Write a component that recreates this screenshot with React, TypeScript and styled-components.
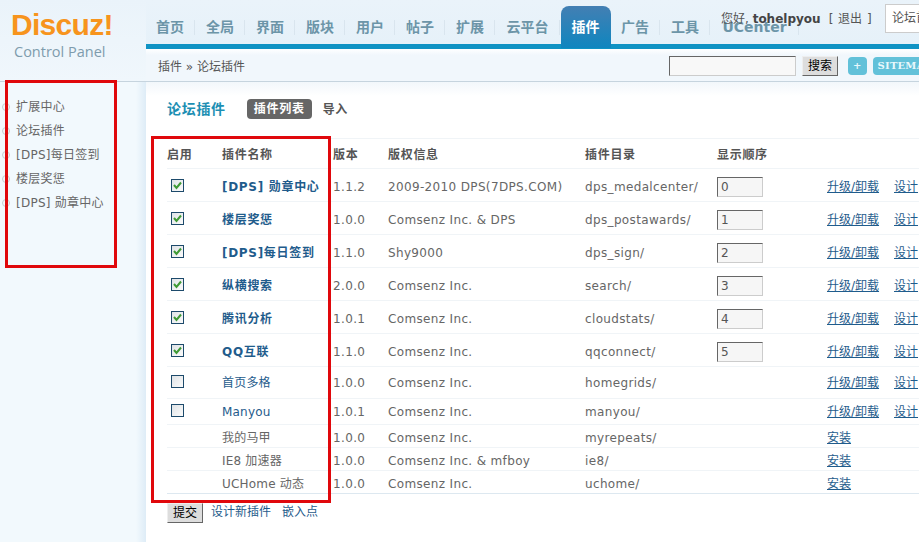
import React from 'react';
import styled, { createGlobalStyle } from 'styled-components';

const GlobalStyle = createGlobalStyle`
  html, body {
    margin: 0;
    padding: 0;
    height: 542px;
    overflow: hidden;
    background: #fff;
  }
  body {
    font: 12px/1.5 "DejaVu Sans", "Noto Sans CJK SC", sans-serif;
    color: #666;
  }
  * { box-sizing: border-box; }
`;

const Page = styled.div`
  position: relative;
  display: grid;
  grid-template-columns: 147px 1fr;
  width: 919px;
  height: 542px;
  overflow: hidden;
`;

const Side = styled.aside`
  display: flex;
  flex-direction: column;
  background: #f2f9fd;
`;

const LogoBox = styled.div`
  height: 82px;
  padding: 7px 0 0 11px;
  background: linear-gradient(#eaf3fa, #f0f7fc);
  border-bottom: 1px solid #c6d4de;
`;

const LogoMark = styled.div`
  font: bold 30px/36px "Liberation Sans", sans-serif;
  letter-spacing: -0.7px;
  color: #f7941d;
`;

const LogoSub = styled.div`
  margin: 0 0 0 3px;
  font: 14.5px/18px "Open Sans", sans-serif;
  color: #7e9cad;
`;

const SideMenu = styled.ul`
  flex: 1;
  list-style: none;
  margin: 0;
  padding: 13px 0 0;
  background: linear-gradient(90deg, #f2f9fd 136px, #dcebf6 147px);
`;

const SideItem = styled.li`
  position: relative;
  height: 24px;
  padding-left: 16px;
  line-height: 24px;
  letter-spacing: 0.25px;
  color: #666;

  &::before {
    content: '';
    position: absolute;
    left: 2px;
    top: 8px;
    width: 6px;
    height: 6px;
    border-radius: 50%;
    border: 1px solid #c4ccd0;
  }
`;

const Main = styled.main`
  display: flex;
  flex-direction: column;
  min-width: 0;
  margin-left: -1px;
`;

const Nav = styled.nav`
  display: flex;
  align-items: flex-start;
  height: 49px;
  padding-top: 10px;
  background: linear-gradient(#eaf3fa, #e6f1f9);
  border-bottom: 5px solid #0f93c4;
`;

const NavItem = styled.div<{ $wide?: number }>`
  position: relative;
  flex: none;
  width: ${p => p.$wide ?? 50}px;
  height: 34px;
  padding-right: 2px;
  text-align: center;
  font: bold 14px/34px "DejaVu Sans", "Noto Sans CJK SC", sans-serif;
  color: #6c95a8;

  &::after {
    content: '';
    position: absolute;
    right: 1px;
    top: 10px;
    width: 1px;
    height: 15px;
    background: #d9e5ee;
  }
`;

const ActiveNavItem = styled.div`
  flex: none;
  width: 50px;
  height: 42px;
  margin-top: -4px;
  padding: 4px 1px 0 0;
  text-align: center;
  font: bold 14px/34px "DejaVu Sans", "Noto Sans CJK SC", sans-serif;
  color: #fff;
  background: linear-gradient(#437fb3, #0f86bf);
  border-radius: 8px 8px 0 0;
`;

const Crumbs = styled.div`
  display: flex;
  align-items: center;
  height: 33px;
  padding: 1px 0 0 12px;
  background: linear-gradient(#fff 0, #f1f7fc 6px);
  border-bottom: 1px solid #c6d4de;
  color: #555;
`;

const CrumbPath = styled.span`
  flex: none;
  width: 511px;
  margin-top: 2px;
`;

const SearchInput = styled.input`
  flex: none;
  width: 127px;
  height: 20px;
  margin-right: 6px;
  background: #f8f8f8;
  border: 1px solid #bbb;
  border-color: #666 #ccc #ccc #666;
`;

const GreyButton = styled.button`
  flex: none;
  height: 20px;
  padding: 0;
  width: 36px;
  font: 12px/16px "DejaVu Sans", "Noto Sans CJK SC", sans-serif;
  color: #000;
  background: #ddd;
  border: 1px solid #ccc;
  border-color: #eee #666 #666 #eee;
`;

const TealChip = styled.span<{ $left: number }>`
  flex: none;
  height: 18px;
  margin-left: ${p => p.$left}px;
  padding: 0 5px;
  border-radius: 4px;
  background: #62c1d9;
  color: #e8f8fc;
  font: bold 10px/18px "DejaVu Serif", serif;
  letter-spacing: 0.2px;
  white-space: nowrap;
`;

const Content = styled.div`
  flex: 1;
  padding: 0 0 0 21px;
  background: linear-gradient(#f2f7fb, #fff 14px);
`;

const TitleRow = styled.div`
  display: flex;
  align-items: center;
  height: 54px;
`;

const Title = styled.h3`
  margin: 0 21px 0 0;
  font: bold 14px/20px "DejaVu Sans", "Noto Sans CJK SC", sans-serif;
  letter-spacing: 0.7px;
  color: #1d8fb3;
`;

const Pill = styled.span`
  padding: 0 7px;
  height: 20px;
  line-height: 20px;
  border-radius: 4px;
  background: #666;
  color: #fff;
  font-weight: bold;
  letter-spacing: 0.7px;
`;

const PlainTab = styled.span`
  margin: 2px 0 0 11px;
  font-weight: bold;
  letter-spacing: 0.7px;
  color: #555;
`;

const Grid = styled.table`
  width: 800px;
  margin-top: 2px;
  table-layout: fixed;
  border-collapse: collapse;
`;

const HeadCell = styled.th`
  height: 30px;
  padding: 3px 0 0;
  text-align: left;
  font-weight: bold;
  letter-spacing: 0.7px;
  color: #555;
  border-top: 1px solid #f0f4f7;
  border-bottom: 1px solid #f0f4f7;
`;

const Row = styled.tr<{ $h: number; $pad: number }>`
  height: ${p => p.$h}px;

  td {
    padding-top: ${p => p.$pad}px;
  }

  &:last-child td {
    border-bottom-color: #dde8f0;
  }
`;

const Cell = styled.td`
  padding: 0;
  white-space: nowrap;
  overflow: hidden;
  color: #666;
  border-bottom: 1px solid #f0f4f7;
`;

const MetaCell = styled(Cell)`
  letter-spacing: 0.35px;
`;

const NameLink = styled.span<{ $on?: boolean; $plain?: boolean }>`
  color: ${p => (p.$plain ? '#666' : '#1f5c8c')};
  font-weight: ${p => (p.$on ? 'bold' : 'normal')};
  letter-spacing: ${p => (p.$on ? '0.7px' : '0.2px')};
`;

const ActionLink = styled.a`
  color: #1f5c8c;
  text-decoration: underline;
`;

const Check = styled.span`
  display: block;
  width: 13px;
  height: 13px;
  margin: -2px 0 0 4px;
  border: 1px solid #1d4a6b;
  background: linear-gradient(135deg, #dfe3e6, #fbfbfb);
  color: #3f9a35;
  svg { display: block; }
`;

const OrderInput = styled.input`
  display: block;
  width: 46px;
  height: 20px;
  padding: 0 3px;
  font: 12px "DejaVu Sans", sans-serif;
  color: #555;
  background: #f6f6f6;
  border: 1px solid #ccc;
  border-color: #666 #ccc #ccc #666;
`;

const Footer = styled.div`
  display: flex;
  align-items: flex-start;
  margin-top: 9px;
  color: #1f5c8c;
`;

const SubmitButton = styled(GreyButton)`
  margin-right: 8px;
`;

const FooterLink = styled.span`
  margin-right: 11px;
  line-height: 18px;
`;

const Welcome = styled.div`
  position: absolute;
  left: 721px;
  top: 10px;
  white-space: nowrap;
  color: #555;

  b { color: #444; margin-right: 8px; }
  span { word-spacing: 1px; }
`;

const Jump = styled.div`
  position: absolute;
  left: 885px;
  top: 4px;
  width: 60px;
  height: 29px;
  padding-left: 6px;
  line-height: 27px;
  background: #fff;
  border: 1px solid #ccc;
  color: #555;
  white-space: nowrap;
`;

const RedFrame = styled.div<{ $x: number; $y: number; $w: number; $h: number }>`
  position: absolute;
  left: ${p => p.$x}px;
  top: ${p => p.$y}px;
  width: ${p => p.$w}px;
  height: ${p => p.$h}px;
  border: 3px solid #e0080c;
  pointer-events: none;
`;

const navBefore = ['首页', '全局', '界面', '版块', '用户', '帖子', '扩展'];

const sideItems = ['扩展中心', '论坛插件', '[DPS]每日签到', '楼层奖惩', '[DPS] 勋章中心'];

type Plugin = {
  name: string; version: string; owner: string; dir: string; h: number; pad: number;
  on?: boolean; box?: boolean; order?: number;
};

const plugins: Plugin[] = [
  { name: '[DPS] 勋章中心', version: '1.1.2', owner: '2009-2010 DPS(7DPS.COM)', dir: 'dps_medalcenter/', h: 33, pad: 3, on: true, box: true, order: 0 },
  { name: '楼层奖惩', version: '1.0.0', owner: 'Comsenz Inc. & DPS', dir: 'dps_postawards/', h: 33, pad: 3, on: true, box: true, order: 1 },
  { name: '[DPS]每日签到', version: '1.1.0', owner: 'Shy9000', dir: 'dps_sign/', h: 33, pad: 3, on: true, box: true, order: 2 },
  { name: '纵横搜索', version: '2.0.0', owner: 'Comsenz Inc.', dir: 'search/', h: 33, pad: 3, on: true, box: true, order: 3 },
  { name: '腾讯分析', version: '1.0.1', owner: 'Comsenz Inc.', dir: 'cloudstats/', h: 33, pad: 3, on: true, box: true, order: 4 },
  { name: 'QQ互联', version: '1.1.0', owner: 'Comsenz Inc.', dir: 'qqconnect/', h: 33, pad: 3, on: true, box: true, order: 5 },
  { name: '首页多格', version: '1.0.0', owner: 'Comsenz Inc.', dir: 'homegrids/', h: 32, pad: 0, box: true },
  { name: 'Manyou', version: '1.0.1', owner: 'Comsenz Inc.', dir: 'manyou/', h: 26, pad: 0, box: true },
  { name: '我的马甲', version: '1.0.0', owner: 'Comsenz Inc.', dir: 'myrepeats/', h: 23, pad: 3 },
  { name: 'IE8 加速器', version: '1.0.0', owner: 'Comsenz Inc. & mfboy', dir: 'ie8/', h: 23, pad: 3 },
  { name: 'UCHome 动态', version: '1.0.0', owner: 'Comsenz Inc.', dir: 'uchome/', h: 23, pad: 3 },
];

const CheckMark = () => (
  <svg width="11" height="11" viewBox="0 0 11 11" fill="none" stroke="currentColor" strokeWidth="2">
    <path d="M2 5l2.5 3L9 2.5" />
  </svg>
);

export default function App() {
  return (
    <Page>
      <GlobalStyle />
      <Side>
        <LogoBox>
          <LogoMark>Discuz!</LogoMark>
          <LogoSub>Control Panel</LogoSub>
        </LogoBox>
        <SideMenu>
          {sideItems.map(item => <SideItem key={item}>{item}</SideItem>)}
        </SideMenu>
      </Side>
      <Main>
        <Nav>
          {navBefore.map(label => <NavItem key={label}>{label}</NavItem>)}
          <NavItem $wide={65}>云平台</NavItem>
          <ActiveNavItem>插件</ActiveNavItem>
          <NavItem>广告</NavItem>
          <NavItem>工具</NavItem>
          <NavItem $wide={89}>UCenter</NavItem>
        </Nav>
        <Crumbs>
          <CrumbPath>插件 » 论坛插件</CrumbPath>
          <SearchInput />
          <GreyButton>搜索</GreyButton>
          <TealChip $left={10}>+</TealChip>
          <TealChip $left={6}>SITEMAP</TealChip>
        </Crumbs>
        <Content>
          <TitleRow>
            <Title>论坛插件</Title>
            <Pill>插件列表</Pill>
            <PlainTab>导入</PlainTab>
          </TitleRow>
          <Grid>
            <colgroup>
              <col width="55" /><col width="111" /><col width="55" /><col width="197" />
              <col width="132" /><col width="110" /><col width="67" /><col width="73" />
            </colgroup>
            <thead>
              <tr>
                <HeadCell>启用</HeadCell>
                <HeadCell>插件名称</HeadCell>
                <HeadCell>版本</HeadCell>
                <HeadCell>版权信息</HeadCell>
                <HeadCell>插件目录</HeadCell>
                <HeadCell>显示顺序</HeadCell>
                <HeadCell />
                <HeadCell />
              </tr>
            </thead>
            <tbody>
              {plugins.map(p => (
                <Row key={p.dir} $h={p.h} $pad={p.pad}>
                  <Cell>{p.box && <Check>{p.on && <CheckMark />}</Check>}</Cell>
                  <Cell><NameLink $on={p.on} $plain={!p.box}>{p.name}</NameLink></Cell>
                  <MetaCell>{p.version}</MetaCell>
                  <MetaCell>{p.owner}</MetaCell>
                  <MetaCell>{p.dir}</MetaCell>
                  <Cell>{p.order !== undefined && <OrderInput defaultValue={p.order} />}</Cell>
                  <Cell><ActionLink>{p.box ? '升级/卸载' : '安装'}</ActionLink></Cell>
                  <Cell>{p.box && <ActionLink>设计</ActionLink>}</Cell>
                </Row>
              ))}
            </tbody>
          </Grid>
          <Footer>
            <SubmitButton>提交</SubmitButton>
            <FooterLink>设计新插件</FooterLink>
            <FooterLink>嵌入点</FooterLink>
          </Footer>
        </Content>
      </Main>
      <Welcome>您好, <b>tohelpyou</b><span>[ 退出 ]</span></Welcome>
      <Jump>论坛首页</Jump>
      <RedFrame $x={5} $y={80} $w={112} $h={188} />
      <RedFrame $x={151} $y={136} $w={180} $h={367} />
    </Page>
  );
}
